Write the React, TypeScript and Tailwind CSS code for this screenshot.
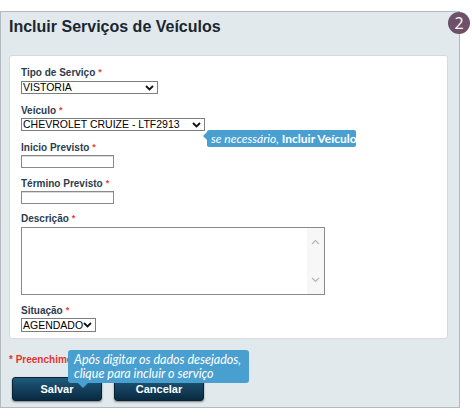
import React from 'react';

const Req = () => <span className="text-[#e8423a] text-[9px] align-top ml-[3px]">*</span>;

const Chevron = () => (
  <svg width="9" height="6" viewBox="0 0 9 6" className="shrink-0">
    <path d="M1 1l3.5 3.5L8 1" fill="none" stroke="#111" strokeWidth="1.8" />
  </svg>
);

const Select: React.FC<{ value: string; w: string; h?: string }> = ({ value, w, h = 'h-[13px]' }) => (
  <div
    className={`${w} ${h} flex items-center justify-between border border-[#7d7d7d] bg-white pl-[1px] pr-[3px] text-[10.5px] leading-none text-black`}
  >
    <span>{value}</span>
    <Chevron />
  </div>
);

const Input: React.FC<{ w: string }> = ({ w }) => (
  <div className={`${w} h-[13px] border border-[#8a8a8a] bg-white shadow-[inset_0_1px_0_#d9d9d9]`} />
);

const Label: React.FC<{ children: React.ReactNode; className?: string }> = ({ children, className = '' }) => (
  <div className={`h-[13px] text-[10px] leading-[13px] font-bold text-[#2c3d4e] ${className}`}>
    {children}
    <Req />
  </div>
);

export default function App() {
  return (
    <div className="relative w-[472px] h-[419px] bg-white font-['Liberation_Sans',Arial,sans-serif]">
      <div className="mt-[11px] w-[460px] h-[397px] border border-[#b1babf] bg-[#e1e9ed] flex flex-col">
        <h1 className="pl-[8px] pt-[5px] text-[16px] leading-[20px] font-bold text-[#1b2630]">
          Incluir Serviços de Veículos
        </h1>

        {/* Form card */}
        <div className="ml-[8px] mt-[18px] w-[439px] h-[284px] rounded-[3px] border border-[#d3dbe0] bg-white pl-[11px] pt-[10px] flex flex-col">
          <Label>Tipo de Serviço</Label>
          <div className="mt-[2px]">
            <Select value="VISTORIA" w="w-[137px]" />
          </div>

          <Label className="mt-[10px]">Veículo</Label>
          <div className="mt-[1px]">
            <Select value="CHEVROLET CRUIZE - LTF2913" w="w-[184px]" />
          </div>

          <Label className="mt-[10px]">Inicio Previsto</Label>
          <div className="mt-[1px]">
            <Input w="w-[93px]" />
          </div>

          <Label className="mt-[9px]">Término Previsto</Label>
          <div className="mt-[1px]">
            <Input w="w-[93px]" />
          </div>

          <Label className="mt-[8px]">Descrição</Label>
          <div className="mt-[2px] w-[304px] h-[68px] border border-[#8a8a8a] bg-white flex justify-end">
            <div className="w-[17px] h-full bg-[#f7f7f7] flex flex-col items-center justify-between py-[11px]">
              <svg width="9" height="6" viewBox="0 0 9 6">
                <path d="M1 5l3.5-3.5L8 5" fill="none" stroke="#b5b5b5" strokeWidth="1.2" />
              </svg>
              <svg width="9" height="6" viewBox="0 0 9 6">
                <path d="M1 1l3.5 3.5L8 1" fill="none" stroke="#b5b5b5" strokeWidth="1.2" />
              </svg>
            </div>
          </div>

          <Label className="mt-[9px]">Situação</Label>
          <div className="mt-[1px]">
            <Select value="AGENDADO" w="w-[75px]" h="h-[14px]" />
          </div>
        </div>

        <p className="ml-[8px] mt-[15px] text-[10px] leading-[12px] font-bold text-[#e3342f]">
          * Preenchimento obrigatório
        </p>

        <div className="ml-[11px] mt-[11px] flex gap-[12px]">
          {['Salvar', 'Cancelar'].map((b) => (
            <button
              key={b}
              className="w-[90px] h-[24px] rounded-[3px] bg-gradient-to-b from-[#1f5a7c] to-[#0a2a41] text-white text-[11px] font-bold shadow-[0_1px_2px_rgba(0,0,0,0.45)] border border-[#0a2233]"
            >
              {b}
            </button>
          ))}
        </div>
      </div>

      {/* Step badge */}
      <div className="absolute left-[448px] top-[1px] w-[22px] h-[22px] rounded-full bg-[#6d5168] flex items-center justify-center text-white text-[16px] font-['Open_Sans',sans-serif] leading-none">
        2
      </div>

      {/* Hint: vehicle */}
      <div className="absolute left-[207px] top-[119px] h-[17px] w-[149px] rounded-[2px] bg-[#4a9fd1] text-white text-[12px] leading-[17px] pl-[4px] font-['Lato',sans-serif] whitespace-nowrap">
        <span className="absolute left-[-4px] top-[2px] w-0 h-0 border-t-[4px] border-b-[4px] border-r-[4px] border-t-transparent border-b-transparent border-r-[#4a9fd1]" />
        <span className="italic">se necessário, </span>
        <span className="font-bold">Incluir Veículo</span>
      </div>

      {/* Hint: save */}
      <div className="absolute left-[68px] top-[339px] w-[181px] h-[33px] rounded-[3px] bg-[#4a9fd1] text-white italic text-[12.5px] leading-[14px] pl-[6px] pt-[3px] font-['Lato',sans-serif] whitespace-nowrap">
        <div>Após digitar os dados desejados,</div>
        <div>clique para incluir o serviço</div>
        <span className="absolute left-[10px] bottom-[-5px] w-0 h-0 border-l-[5px] border-r-[5px] border-t-[5px] border-l-transparent border-r-transparent border-t-[#4a9fd1]" />
      </div>
    </div>
  );
}
